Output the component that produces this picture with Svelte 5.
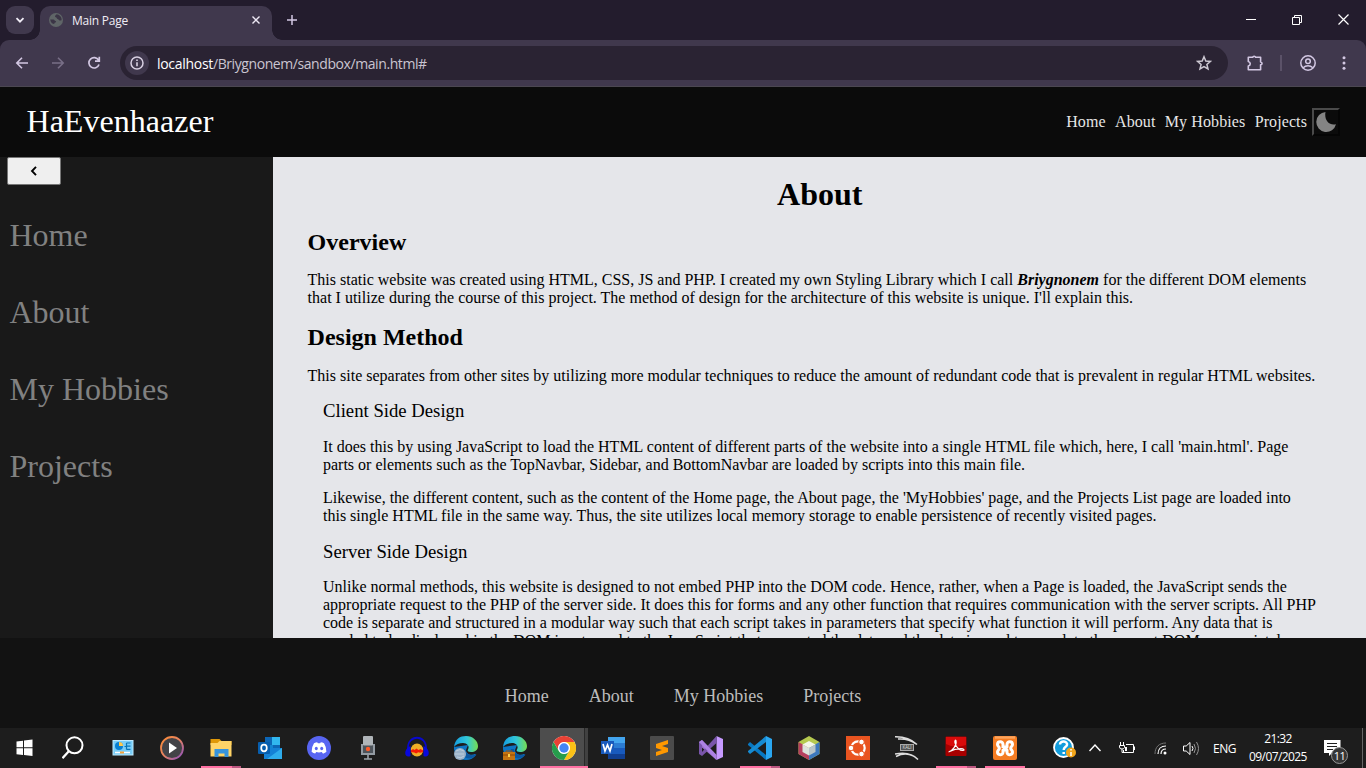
<script>
  const links = ['Home', 'About', 'My Hobbies', 'Projects'];
  const apps = ['start', 'search', 'panel', 'player', 'files', 'outlook', 'discord', 'mic', 'audacity', 'edge', 'edgework', 'chrome', 'word', 'sublime', 'vs', 'vscode', 'netbeans', 'ubuntu', 'kali', 'acrobat', 'xampp'];
  const running = ['files', 'vscode', 'acrobat', 'xampp', 'chrome'];
  const grouped = ['files', 'vscode', 'acrobat'];
</script>

<div class="screen">
  <header class="tabs">
    <div class="tabsearch"><svg width="10" height="10" viewBox="0 0 10 10"><path d="M1.5 3.2 5 6.7 8.5 3.2" fill="none" stroke="#f1edf7" stroke-width="1.8" /></svg></div>
    <div class="tab">
      <svg width="14" height="14" viewBox="0 0 14 14"><circle cx="7" cy="7" r="7" fill="#5f6567" /><path d="M1.200 6.500h3.300c1 0 1 1.400 2 1.400.8 0 .8 1.600-.2 1.600-1 0-.8 1-1 1.600C3.500 11 1.600 9.500 1.200 6.500ZM7.500 1.300c-.3 1-1.500 1-1.500 2 0 1.200 1.500.8 1.700 1.800.2 1.200 1.800 1 2.300 2 .4.800 1.500.4 2.600.2C13 4 10.500 1.600 7.500 1.300Z" fill="#3b3546" /></svg>
      <span class="tabname">Main Page</span>
      <svg class="tabclose" width="8" height="8" viewBox="0 0 8 8"><path d="m.5.5 7 7m0-7-7 7" stroke="#eee9f5" stroke-width="1.400" /></svg>
    </div>
    <svg class="plus" width="10" height="10" viewBox="0 0 10 10"><path d="M5 0v10M0 5h10" stroke="#d3c8e3" stroke-width="1.500" /></svg>
    <div class="window">
      <svg width="10" height="12" viewBox="0 0 10 12"><path d="M0 5.500h10" stroke="#fff" /></svg>
      <svg class="restore" width="10" height="10" viewBox="0 0 10 10"><path d="M.5 2.500h7v7h-7zM2.500 2.500v-2h7v7h-2" fill="none" stroke="#fff" /></svg>
      <svg width="11" height="11" viewBox="0 0 11 11"><path d="m.5.5 10 10m0-10-10 10" stroke="#fff" stroke-width="1.200" /></svg>
    </div>
  </header>

  <div class="toolbar">
    <svg width="14" height="14" viewBox="0 0 14 14"><path d="M13 7H2m5-5.200L1.800 7 7 12.200" fill="none" stroke="#d3c8e3" stroke-width="1.600" /></svg>
    <svg width="14" height="14" viewBox="0 0 14 14"><path d="M1 7h11M7 1.800 12.200 7 7 12.200" fill="none" stroke="#786f87" stroke-width="1.600" /></svg>
    <svg width="14" height="14" viewBox="0 0 14 14"><path d="M11.600 4.200A5.200 5.200 0 1 0 12 8.500M12.300.8v4.400H8" fill="none" stroke="#d3c8e3" stroke-width="1.700" /></svg>
    <div class="address">
      <span class="info"><svg width="14" height="14" viewBox="0 0 14 14"><circle cx="7" cy="7" r="6" fill="none" stroke="#d8d0e2" stroke-width="1.500" /><path d="M7 6.200v4M7 3.600v1.500" stroke="#d8d0e2" stroke-width="1.600" /></svg></span>
      <span class="url"><b>localhost</b>/Briygnonem/sandbox/main.html#</span>
      <svg class="star" width="16" height="16" viewBox="0 0 16 16"><path d="m8 1.700 1.800 4.300 4.600.4-3.500 3 1.100 4.500-4-2.400-4 2.400 1.100-4.500-3.500-3 4.600-.4z" fill="none" stroke="#cdc8d2" stroke-width="1.500" /></svg>
    </div>
    <svg class="puzzle" width="18" height="18" viewBox="0 0 18 18"><path d="M2.300 3.300h4.400c.4-1.500 2.500-1.500 2.900 0h5v4.700c1.900.3 1.900 2.500 0 2.800v4.900H2.300v-3.600c2.600-.8 2.600-3.900 0-4.700z" fill="none" stroke="#d3c8e3" stroke-width="1.600" stroke-linejoin="round" /></svg>
    <i class="divider"></i>
    <svg class="user" width="16" height="16" viewBox="0 0 16 16"><circle cx="8" cy="8" r="7.200" fill="none" stroke="#d3c8e3" stroke-width="1.500" /><circle cx="8" cy="6.300" r="2.300" fill="none" stroke="#d3c8e3" stroke-width="1.500" /><path d="M3.200 12.700c2.600-2.500 7-2.500 9.600 0" fill="none" stroke="#d3c8e3" stroke-width="1.500" /></svg>
    <svg class="dots" width="4" height="14" viewBox="0 0 4 14"><g fill="#d3c8e3"><circle cx="2" cy="1.700" r="1.500" /><circle cx="2" cy="7" r="1.500" /><circle cx="2" cy="12.300" r="1.500" /></g></svg>
  </div>

  <nav class="topnav">
    <span class="brand">HaEvenhaazer</span>
    <div class="toplinks">{#each links as link}<a href="#top">{link}</a>{/each}</div>
    <div class="theme"><svg width="20" height="20" viewBox="0 0 20 20"><path d="M9.500 0A10 10 0 1 0 20 12.300C13 14 8 8 9.500 0Z" fill="#848484" /></svg></div>
  </nav>

  <div class="body">
    <aside>
      <div class="collapse"><svg width="8" height="10" viewBox="0 0 8 10"><path d="M6 .8 2 5l4 4.200" fill="none" stroke="#000" stroke-width="1.900" /></svg></div>
      {#each links as link}<a href="#side">{link}</a>{/each}
    </aside>
    <main>
      <h1>About</h1>
      <h2>Overview</h2>
      <p>This static website was created using HTML, CSS, JS and PHP. I created my own Styling Library which I call <em>Briygnonem</em> for the different DOM elements<br />that I utilize during the course of this project. The method of design for the architecture of this website is unique. I'll explain this.</p>
      <h2>Design Method</h2>
      <p class="single">This site separates from other sites by utilizing more modular techniques to reduce the amount of redundant code that is prevalent in regular HTML websites.</p>
      <section>
        <h3>Client Side Design</h3>
        <p>It does this by using JavaScript to load the HTML content of different parts of the website into a single HTML file which, here, I call 'main.html'. Page<br />parts or elements such as the TopNavbar, Sidebar, and BottomNavbar are loaded by scripts into this main file.</p>
        <p class="next">Likewise, the different content, such as the content of the Home page, the About page, the 'MyHobbies' page, and the Projects List page are loaded into<br />this single HTML file in the same way. Thus, the site utilizes local memory storage to enable persistence of recently visited pages.</p>
        <h3 class="server">Server Side Design</h3>
        <p class="next">Unlike normal methods, this website is designed to not embed PHP into the DOM code. Hence, rather, when a Page is loaded, the JavaScript sends the<br />appropriate request to the PHP of the server side. It does this for forms and any other function that requires communication with the server scripts. All PHP<br />code is separate and structured in a modular way such that each script takes in parameters that specify what function it will perform. Any data that is<br />needed to be displayed in the DOM is returned to the JavaScript that requested the data and the data is used to populate the current DOM appropriately.</p>
      </section>
    </main>
  </div>

  <footer>{#each links as link}<a href="#bottom">{link}</a>{/each}</footer>

  <div class="taskbar">
    {#each apps as app}
      <div class="app" class:active={app === 'chrome'} class:running={running.includes(app)} class:grouped={grouped.includes(app)}>
        <svg width="24" height="24" viewBox="0 0 24 24">
          {#if app === 'start'}
            <path d="M3.500 5.500 10 4.700v6.600H3.500zM11 4.500l8.500-1v7.800H11zM3.500 12.300H10v6.800l-6.500-.8zM11 12.300h8.500V20l-8.500-1z" fill="#fff" />
          {:else if app === 'search'}
            <circle cx="12.500" cy="9.300" r="8" fill="none" stroke="#fff" stroke-width="2" /><path d="m6.800 15.200-6.300 7" stroke="#fff" stroke-width="2.200" />
          {:else if app === 'panel'}
            <rect x="1.500" y="4" width="21" height="15.500" fill="#bfeaff" /><rect x="2.500" y="5" width="19" height="13.500" fill="#79cdf8" /><circle cx="8" cy="10" r="4" fill="#087fd1" /><path d="M8 10V6a4 4 0 0 1 4 4z" fill="#ffc84c" /><path d="M13.500 10.500h2m0-3.500v6.500m0-6.500h4m-4 3.200h4m-4 3.200h4" stroke="#0875b7" stroke-width="1.200" /><path d="M4 16.500h15" stroke="#fff" stroke-width="1.500" /><path d="M9 16.500h4" stroke="#f5a33b" stroke-width="2" />
          {:else if app === 'player'}
            <defs><linearGradient id="ring" x2="1" y2="1"><stop stop-color="#ff8d35" /><stop offset=".5" stop-color="#e48264" /><stop offset="1" stop-color="#874dc5" /></linearGradient></defs><circle cx="12" cy="12" r="11" fill="#434347" stroke="url(#ring)" stroke-width="1.800" /><path d="m9 6.500 8 5.500-8 5.500z" fill="#fff" />
          {:else if app === 'files'}
            <path d="M1.500 3h9l2 2h10v4h-21z" fill="#df9808" /><path d="M1.500 7h7l2-2h12v15.500h-21z" fill="#ffd467" /><path d="M5.500 21v-8h14v8h-4v-3.500h-6V21z" fill="#3794dc" />
          {:else if app === 'outlook'}
            <path d="M7 1h15v16H7z" fill="#0c66b6" /><path d="M14 1h8v8h-8z" fill="#31b7ef" /><path d="M7 9h8v8H7z" fill="#1383d1" /><path d="M6 12h18v11H6z" fill="#1481d5" /><path d="m24 12-15 11h15z" fill="#2eaceb" /><rect y="6" width="12" height="12" rx="1" fill="#075eae" /><ellipse cx="6" cy="12" rx="2.800" ry="3.300" fill="none" stroke="#fff" stroke-width="1.700" />
          {:else if app === 'discord'}
            <circle cx="12" cy="12" r="12" fill="#5865f2" /><path d="M7 7.200q2-.9 3.200-.9l.6 1h2.400l.6-1q1.700.1 3.200.9 2.600 4 2.400 8.500c-1.300 1.100-2.600 1.700-3.600 1.800l-1-1.500c-1.800.5-3.800.5-5.600 0l-1 1.500q-1.800-.2-3.600-1.800-.2-4.500 2.400-8.500Z" fill="#fff" /><ellipse cx="9.300" cy="12.500" rx="1.500" ry="1.700" fill="#5865f2" /><ellipse cx="14.700" cy="12.500" rx="1.500" ry="1.700" fill="#5865f2" />
          {:else if app === 'mic'}
            <path d="M5 8h2v9h10V8h2v11H5z" fill="#939ba3" /><rect x="7" y="0" width="10" height="10" rx="1" fill="#b0b5b9" /><rect x="7" y="9.500" width="10" height="7.500" fill="#4d545b" /><path d="M12 19v3.500M8 23h8" fill="none" stroke="#9ba2a9" stroke-width="1.600" /><circle cx="12" cy="13" r="2.200" fill="#ff5a28" />
          {:else if app === 'audacity'}
            <ellipse cx="12" cy="14" rx="6.300" ry="6.500" fill="#efae27" /><path d="M5.800 14.500 8 13l1.500 1 2-1.500 2 1.500 2-1 2.700 1.500v1.500l-3 .8-2-.5-2 1.200-2-1-3.400-.5z" fill="#f51b05" /><path d="M3 13C2-2 22-2 21 13" fill="none" stroke="#0908cd" stroke-width="1.800" /><path d="M5.500 10v10C1 22-1 18 1 14q1-3 4.500-4M18.500 10v10c4.500 2 6.500-2 4.500-6q-1-3-4.500-4" fill="#0808dd" />
          {:else if app === 'edge' || app === 'edgework'}
            <defs><linearGradient id="edgeTop" x2="1"><stop stop-color="#159de0" /><stop offset=".55" stop-color="#32c8d8" /><stop offset="1" stop-color="#76dc50" /></linearGradient></defs><path d="M0 11a12 12 0 0 0 12 13c4 0 8-2 10-5l-1-1c-4 2-9 0-9-4L14 9z" fill="#0d75c4" /><path d="M8 13c-2 6 4 11 10 9 2-1 4-3 4.500-4C18 21 11 18 11 13z" fill="#0a57a0" /><path d="M0 11C1 3 6 0 12 0c7 0 12 5 12 10 0 4-3 6-7 6-3 0-4-1-3-2.500C16 10 13 7 9 7 5 7 2 8.500 0 11" fill="url(#edgeTop)" />
            {#if app === 'edge'}<circle cx="6" cy="18" r="6" fill="#9ab2c9" /><path d="M2 15q4-3 8 0M1 18h9M3 21q4 2 7-1" fill="none" stroke="#c3d3e2" stroke-width=".8" />{:else}<path d="M3 17v-2h6v2" fill="none" stroke="#a45108" /><rect y="16" width="12" height="8" fill="#c57411" /><path d="M0 19h12" stroke="#8d4605" /><path d="M5 18h2v3H5z" fill="#ffd04b" />{/if}
          {:else if app === 'chrome'}
            <circle cx="12" cy="12" r="12" fill="#fff" /><path d="M1.600 6A12 12 0 0 1 22.400 6H12a6 6 0 0 0-5.200 9z" fill="#e94235" /><path d="M22.400 6A12 12 0 0 1 12 24l5.200-9A6 6 0 0 0 12 6z" fill="#fbc116" /><path d="M12 24A12 12 0 0 1 1.600 6l5.200 9A6 6 0 0 0 17.200 15z" fill="#269c4c" /><circle cx="12" cy="12" r="5.800" fill="#fff" /><circle cx="12" cy="12" r="4.700" fill="#4285f4" />
          {:else if app === 'word'}
            <path d="M7 1h17v22H7z" fill="#185abd" /><path d="M7 1h17v6H7z" fill="#43a5ef" /><path d="M7 7h17v5H7z" fill="#2b7cd3" /><path d="M7 18h17v5H7z" fill="#103f91" /><path d="M0 5h13v13H0z" fill="#185abd" /><path d="m2 8 2 7 2.500-6L9 15l2-7" fill="none" stroke="#fff" stroke-width="1.700" />
          {:else if app === 'sublime'}
            <rect width="24" height="24" rx="1" fill="#4b4b4b" /><path d="m6 8 12-4v4l-6 2 6 2v4L6 20v-4l6-2-6-2z" fill="#ff9800" />
          {:else if app === 'vs'}
            <path d="M17.500 0 24 3v18l-6.500 3z" fill="#c69aff" /><path d="M0 6 3 4l14.500 15v5L0 9z" fill="#9b70ca" /><path d="M0 18V6l3 2v8l14.500-16v7L3 20z" fill="#7955aa" /><path d="M3 4 17.500 19v5L0 6z" fill="#ad82e4" />
          {:else if app === 'vscode'}
            <path d="m0 8 2-2 16 13v5L0 9z" fill="#0878c2" /><path d="m0 16 2 2L18 6V0L0 15z" fill="#168bd2" /><path d="m18 0 6 3v18l-6 3z" fill="#2aa7f1" />
          {:else if app === 'netbeans'}
            <path d="m12 0 10.500 6v12L12 24 1.500 18V6z" fill="#b5c94f" /><path d="m1.500 6 10.500 6v12L1.500 18z" fill="#b63f5e" /><path d="M22.500 6 12 12v12l10.500-6z" fill="#3c78bd" /><path d="m5.500 8.500 6.500 3.500v7.500l-6.500-3.500z" fill="#dce3dc" /><path d="M5.500 8.500 12 5l6.500 3.500L12 12z" fill="#f3f6e9" /><path d="m12 12 6.500-3.500V16L12 19.500z" fill="#b9c5c8" />
          {:else if app === 'ubuntu'}
            <path d="M0 0h24v24H0z" fill="#e95420" /><circle cx="12" cy="12" r="6.700" fill="none" stroke="#fff" stroke-width="2.200" /><g fill="#fff" stroke="#e95420"><circle cx="5" cy="12" r="2.800" /><circle cx="15.500" cy="6" r="2.800" /><circle cx="15.500" cy="18" r="2.800" /></g>
          {:else if app === 'kali'}
            <path d="M0 .8c9-.2 16 2 22 7.700M3 3c7-.5 13 1 18 5M0 18c10-2 18 0 23 5.500M1 20.500c6-3 13-2.500 17-.8" fill="none" stroke="#dedede" stroke-width="1.500" /><rect x="5.500" y="8.500" width="13" height="6" fill="#555" stroke="#aaa" /><text x="12" y="13.300" text-anchor="middle" font-size="4.500" fill="#ddd">KALI</text>
          {:else if app === 'acrobat'}
            <rect x="1.500" y=".5" width="21" height="19.500" rx="1" fill="#a80000" /><path d="M2 1h20v8Q11 13 2 8z" fill="#d90b0b" /><path d="M4.500 16c4-1 8.500-7 7.500-11-.3-1.500-1.600-1-1 2 1 4.500 5 7.500 8 7.500 2 0 1-1.800-2-1.800-4 0-8 1-12 3" fill="none" stroke="#fff" stroke-width="1.200" />
          {:else}
            <rect width="24" height="24" rx="2" fill="#f47c23" /><path d="M2 1h20M2 2h20" stroke="#ffb372" /><path d="M10 12V8.500C10 4.800 4.500 5 4.500 8.500c0 2 1.800 2 1.800 3.700s-1.800 1.800-1.800 3.800c0 3.500 5.500 3.500 5.500.3v-2.300h4v2.300c0 3.200 5.500 3.200 5.500-.3 0-2-1.800-2.100-1.800-3.800s1.800-1.700 1.800-3.700C19.500 5 14 4.800 14 8.500V11h-4" fill="none" stroke="#fff" stroke-width="3" stroke-linejoin="round" />
          {/if}
        </svg>
      </div>
    {/each}
    <div class="tray">
      <svg width="23" height="22" viewBox="0 0 23 22"><circle cx="10.500" cy="10.500" r="9.500" fill="#129cdc" stroke="#fff" stroke-width="1.800" /><path d="M7 7.500c0-4.500 8-3.500 7 .5-.5 2-3.300 2-3.300 5M10.700 15v2" fill="none" stroke="#fff" stroke-width="2.500" /><circle cx="18" cy="15.500" r="5" fill="#f2a51b" /><path d="M18 12v1.500m0 1.500v4" stroke="#fff" stroke-width="1.500" /></svg>
      <svg class="caret" width="12" height="8" viewBox="0 0 12 8"><path d="m.5 7 5.500-6 5.500 6" fill="none" stroke="#fff" stroke-width="1.400" /></svg>
      <svg class="battery" width="16" height="12" viewBox="0 0 16 12"><path d="M7 2.500h7.500v8H4.500V8M15.500 4.500v3.500M1.500 0v3M4.500 0v3M.5 3.500h5v2Q5 7 3 7 .5 7 .5 5zM3 7v3.500h2" fill="none" stroke="#fff" /><path d="M6 5h2v4H6z" fill="#fff" /></svg>
      <svg class="wifi" width="13" height="13" viewBox="0 0 13 13"><path d="M1 12C1 5 5 1 12 1" fill="none" stroke="#737373" /><path d="M4 12c0-5 3-8 8-8M7 12c0-3 2-5 5-5" fill="none" stroke="#fff" stroke-width="1.200" /><circle cx="11" cy="11" r="1.500" fill="#fff" /></svg>
      <svg class="sound" width="17" height="15" viewBox="0 0 17 15"><path d="M.5 5h2.700L7 1.500v12L3.200 10H.5zM9 5q2 2.500 0 5" fill="none" stroke="#fff" /><path d="M11 3q3 4.500 0 9M13.500 1q4 6.500 0 13" fill="none" stroke="#929292" /></svg>
      <span class="lang">ENG</span>
      <div class="clock"><span>21:32</span><span>09/07/2025</span></div>
      <div class="notice"><svg width="17" height="16" viewBox="0 0 17 16"><path d="M0 0h16.500v13H8l-3 3v-3H0z" fill="#fff" /><path d="M3 3.500h10M3 6.500h10M3 9.500h6" stroke="#202020" /></svg><span>11</span></div>
    </div>
  </div>
</div>

<style>
  :global(body) { margin: 0; overflow: hidden; }
  * { box-sizing: border-box; }
  svg { display: block; flex: none; }
  a { color: inherit; text-decoration: none; }
  .screen { width: 1366px; height: 768px; display: flex; flex-direction: column; overflow: hidden; font-family: "Liberation Serif", serif; background: #231c2d; }
  .tabs { height: 40px; display: flex; background: #231c2d; flex: none; }
  .tabsearch { width: 28px; height: 28px; margin: 6px 6px 0; border-radius: 9px; background: #40384d; display: grid; place-items: center; }
  .tab { position: relative; width: 232px; height: 34px; margin-top: 6px; padding: 0 12px 6px 9px; display: flex; align-items: center; border-radius: 10px 10px 0 0; background: #40384d; }
  .tab::before, .tab::after { content: ""; position: absolute; bottom: 0; width: 10px; height: 10px; background: radial-gradient(circle at 0 0, transparent 9.500px, #40384d 10px); }
  .tab::before { left: -10px; }
  .tab::after { right: -10px; background: radial-gradient(circle at 100% 0, transparent 9.500px, #40384d 10px); }
  .tabname { font: 12px "Open Sans", sans-serif; letter-spacing: -.24px; color: #f0edf5; margin: 1px 0 0 9px; }
  .tabclose { margin-left: auto; }
  .plus { margin: 15px 0 0 15px; }
  .window { margin: 14px 17px 0 auto; display: flex; gap: 36px; }
  .restore { margin-top: 1px; }
  .toolbar { height: 47px; flex: none; padding: 0 20px 1px 15px; display: flex; align-items: center; gap: 22px; background: #40384d; border-bottom: 1px solid #4b4751; border-radius: 9px 9px 0 0; }
  .address { width: 1108px; height: 34px; margin-left: -3px; border-radius: 17px; background: #2a2333; display: flex; align-items: center; padding: 0 16px 0 5px; }
  .info { width: 24px; height: 24px; border-radius: 50%; background: #40384d; display: grid; place-items: center; }
  .url { font: 14px "Open Sans", sans-serif; letter-spacing: -.42px; margin: 1px 0 0 8px; color: #cac5d1; white-space: nowrap; }
  .url b { font-weight: 400; color: #fff; letter-spacing: -.3px; }
  .star { margin-left: auto; }
  .puzzle { margin-left: -4px; }
  .divider { width: 2px; height: 16px; background: #5b5268; margin-left: -6px; }
  .user { margin-left: -4px; }
  .dots { margin-left: 4px; }
  .topnav { height: 70px; flex: none; background: #0b0b0b; display: flex; align-items: center; padding: 0 26px; color: #fff; }
  .brand { font-size: 32px; line-height: 36px; margin: -2px 0 0 .5px; letter-spacing: .03px; }
  .toplinks { display: flex; gap: 9.300px; margin-left: auto; font-size: 16px; letter-spacing: .1px; color: #e6e6e6; white-space: nowrap; }
  .theme { width: 28px; height: 28px; margin-left: 5px; border: 2px solid; border-color: #4a4a4a #050505 #050505 #4a4a4a; display: grid; place-items: center; }
  .body { height: 481px; flex: none; display: flex; }
  aside { width: 273px; background: #191919; color: #818181; font-size: 32px; line-height: 37px; }
  aside a { display: block; margin: 0 0 40px 9.500px; }
  .collapse { width: 54px; height: 28px; margin: 0 0 32px 7px; border: 1px solid #767676; border-radius: 2px; background: #efefef; display: grid; place-items: center; }
  main { width: 1093px; height: 481px; overflow: hidden; padding: 19px 34px 0 34.600px; background: #e5e6ea; color: #000; white-space: nowrap; }
  h1, h2, h3, p { margin: 0; }
  h1 { font-size: 32px; line-height: 36px; text-align: center; }
  h2 { font-size: 24px; line-height: 27px; margin-top: 17px; }
  p { font-size: 16px; line-height: 18px; margin-top: 15px; }
  em { font-weight: 700; }
  .single { margin-top: 16px; }
  section { margin-left: 15.400px; }
  h3 { font-size: 18.720px; font-weight: 400; line-height: 22px; margin-top: 15px; }
  section p { margin-top: 16px; }
  section p.next { margin-top: 15px; }
  h3.server { margin-top: 16px; }
  footer { height: 90px; flex: none; padding-top: 48px; background: #121212; color: #bcbcbc; display: flex; justify-content: center; gap: 40px; font-size: 18px; line-height: 21px; }
  .taskbar { height: 40px; flex: none; background: #1d1d1d; display: flex; color: #fff; font-family: "Open Sans", sans-serif; font-size: 12px; }
  .app { position: relative; width: 49px; height: 40px; flex: none; display: grid; place-items: center; }
  .running::after { content: ""; position: absolute; left: 5px; bottom: 0; width: 40px; height: 2px; background: #ff70a3; }
  .grouped::after { background: linear-gradient(90deg, #ff70a3 31px, #bb5680 31px); }
  .active { background: linear-gradient(90deg, #1d1d1d 1px, #4d4d4d 1px, #4d4d4d 45px, #292929 45px, #292929 46px, #414141 46px); }
  .active::after { left: 1px; width: 48px; }
  .tray { width: 310px; flex: none; display: flex; align-items: center; margin-left: 24px; border-right: 1px solid #666; padding-right: 11px; }
  .caret { margin-left: 13px; }
  .battery { margin-left: 18px; }
  .wifi { margin-left: 19px; }
  .sound { margin-left: 16px; }
  .lang { margin-left: 13px; letter-spacing: -.5px; }
  .clock { width: 60px; margin-left: 12px; display: flex; flex-direction: column; align-items: center; line-height: 18px; letter-spacing: -.6px; }
  .notice { position: relative; margin: -1px 0 0 16px; }
  .notice span { position: absolute; left: 7px; top: 7px; width: 17px; height: 17px; border: 1px solid #969696; border-radius: 50%; background: #363636; text-align: center; font-size: 11px; line-height: 15px; letter-spacing: -.5px; }
</style>
